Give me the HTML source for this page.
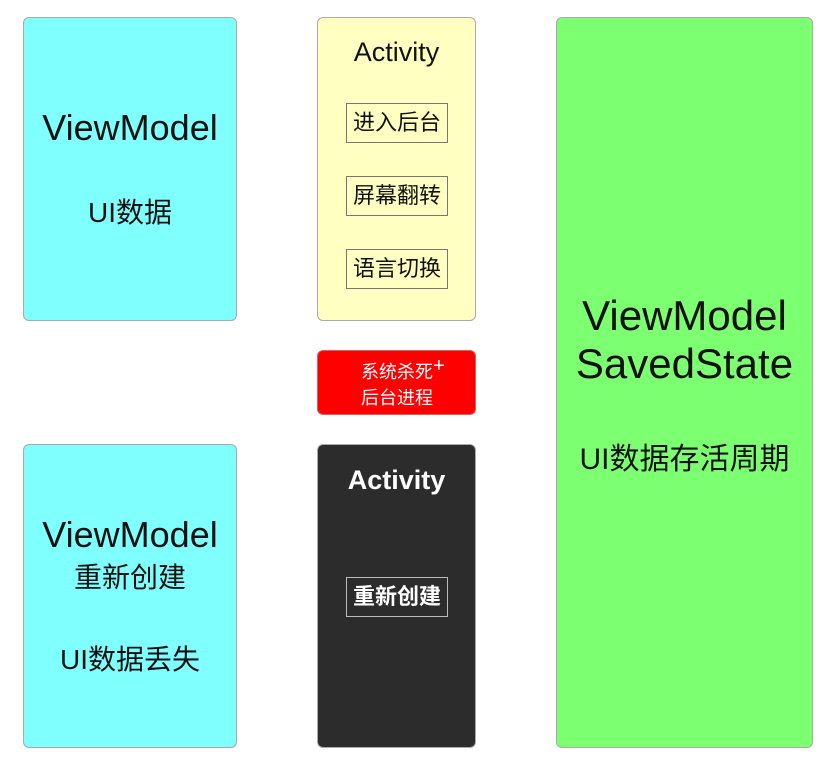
<!DOCTYPE html>
<html><head><meta charset="utf-8"><style>
*{margin:0;padding:0;box-sizing:border-box}
body{width:838px;height:762px;background:#fff;position:relative;overflow:hidden;font-family:"Liberation Sans","Noto Sans CJK SC",sans-serif;color:#111}
.b{position:absolute;border-radius:6px;border:1px solid #aaa}
.t{position:absolute;left:0;right:0;text-align:center;line-height:1;white-space:nowrap}
.ib{position:absolute;left:28px;width:102px;height:40px;border:1px solid #777;font-size:22px;line-height:38px;text-align:center}
</style></head><body>
<div class="b" style="left:23px;top:17px;width:214px;height:304px;background:#80ffff">
 <div class="t" style="top:92px;font-size:36px">ViewModel</div>
 <div class="t" style="top:181px;font-size:28px">UI数据</div>
</div>
<div class="b" style="left:23px;top:444px;width:214px;height:304px;background:#80ffff">
 <div class="t" style="top:72px;font-size:36px">ViewModel</div>
 <div class="t" style="top:119px;font-size:28px">重新创建</div>
 <div class="t" style="top:201px;font-size:28px">UI数据丢失</div>
</div>
<div class="b" style="left:317px;top:17px;width:159px;height:304px;background:#ffffc2">
 <div class="t" style="top:21px;font-size:27px">Activity</div>
 <div class="ib" style="top:85px">进入后台</div>
 <div class="ib" style="top:158px">屏幕翻转</div>
 <div class="ib" style="top:231px">语言切换</div>
</div>
<div class="b" style="left:317px;top:350px;width:159px;height:65px;background:#ff0000;color:#fff;border-color:#c66">
 <div style="position:absolute;left:43px;top:8px;font-size:18px;line-height:26px">系统杀死<span style="position:relative;top:-6px;font-size:20px">+</span><br>后台进程</div>
</div>
<div class="b" style="left:317px;top:444px;width:159px;height:304px;background:#2c2c2c;color:#fff">
 <div class="t" style="top:22px;font-size:27px;font-weight:bold">Activity</div>
 <div class="ib" style="top:132px;border-color:#bbb;font-weight:bold">重新创建</div>
</div>
<div class="b" style="left:556px;top:17px;width:257px;height:731px;background:#7dff72">
 <div class="t" style="top:277px;font-size:42px">ViewModel</div>
 <div class="t" style="top:325px;font-size:42px">SavedState</div>
 <div class="t" style="top:427px;font-size:30px">UI数据存活周期</div>
</div>
</body></html>
